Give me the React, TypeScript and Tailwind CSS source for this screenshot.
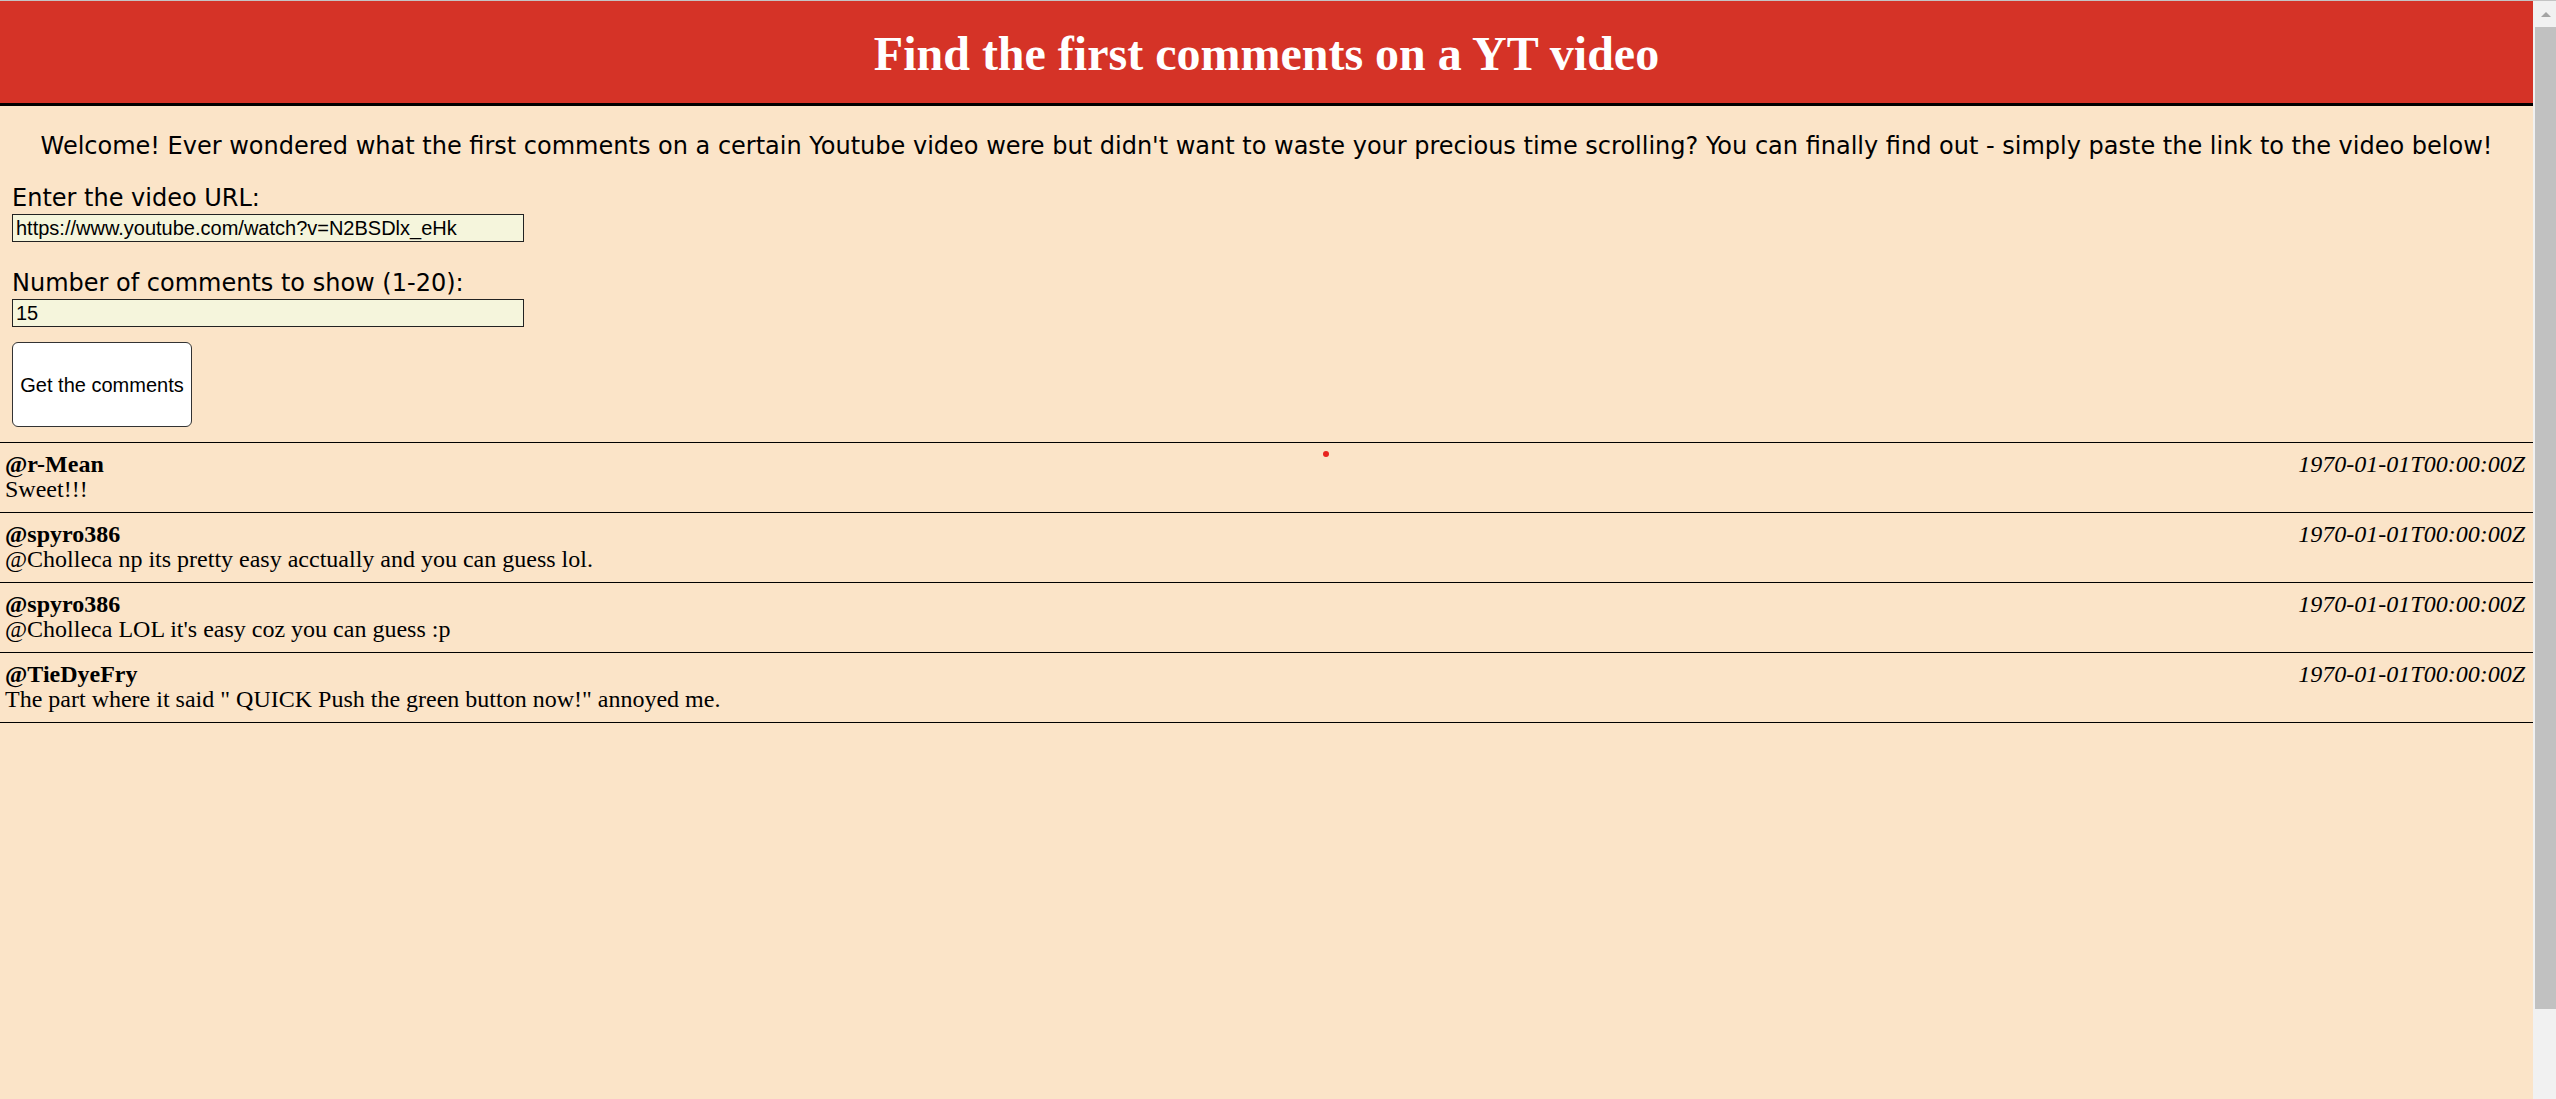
import React from "react";

const comments = [
  { user: "@r-Mean", text: "Sweet!!!" },
  { user: "@spyro386", text: "@Cholleca np its pretty easy acctually and you can guess lol." },
  { user: "@spyro386", text: "@Cholleca LOL it's easy coz you can guess :p" },
  { user: "@TieDyeFry", text: 'The part where it said " QUICK Push the green button now!" annoyed me.' },
];

export default function App() {
  return (
    <div className="w-full h-[1099px] overflow-hidden flex flex-col bg-[#f1f1f1]">
      <div className="h-px w-full bg-[#c4c4c4]" />
      <div className="flex flex-1 min-h-0">
        <main className="relative flex-1 bg-[#fbe4c8] text-black">
          <header className="h-[105px] bg-[#d53327] border-b-[3px] border-black flex items-center justify-center pt-[2px]">
            <h1 className="text-white font-bold text-[48px] leading-[53px] font-['Liberation_Serif',serif]">
              Find the first comments on a YT video
            </h1>
          </header>
          <p className="mt-[27px] text-center text-[24px] leading-[27px] font-['DejaVu_Sans',sans-serif]">
            Welcome! Ever wondered what the first comments on a certain Youtube video were but didn't want to waste your precious time scrolling? You can finally find out - simply paste the link to the video below!
          </p>
          <div className="pl-[12px] pb-[15px] font-['DejaVu_Sans',sans-serif]">
            <div className="mt-[25px] text-[24px] leading-[27px]">Enter the video URL:</div>
            <input
              readOnly
              value="https://www.youtube.com/watch?v=N2BSDlx_eHk"
              className="mt-[2px] block w-[512px] h-[28px] border border-[#222] bg-[#f5f5dc] pl-[3px] text-[20px] text-black font-['Liberation_Sans',sans-serif] outline-none"
            />
            <div className="mt-[28px] text-[24px] leading-[27px]">Number of comments to show (1-20):</div>
            <input
              readOnly
              value="15"
              className="mt-[2px] block w-[512px] h-[28px] border border-[#222] bg-[#f5f5dc] pl-[3px] text-[20px] text-black font-['Liberation_Sans',sans-serif] outline-none"
            />
            <button className="mt-[15px] block w-[180px] h-[85px] bg-white border border-[#333] rounded-[6px] text-[20px] text-black font-['Liberation_Sans',sans-serif]">
              Get the comments
            </button>
          </div>
          <div className="border-t border-black font-['Liberation_Serif',serif]">
            {comments.map((c, i) => (
              <div key={i} className="border-b border-black pl-[5px] pr-[8px] pt-[9px] pb-[10px] text-[24px] leading-[25px]">
                <div className="flex justify-between">
                  <span className="font-bold">{c.user}</span>
                  <span className="italic">1970-01-01T00:00:00Z</span>
                </div>
                <div>{c.text}</div>
              </div>
            ))}
          </div>
          <div className="absolute left-[1323px] top-[450px] w-[6px] h-[6px] rounded-full bg-[#e8231f]" />
        </main>
        <aside className="w-[23px] flex flex-col bg-[#f1f1f1]">
          <div className="h-[26px] flex items-center justify-center pl-[2px]">
            <div className="w-0 h-0 border-l-[5px] border-r-[5px] border-b-[5px] border-l-transparent border-r-transparent border-b-[#a3a3a3]" />
          </div>
          <div className="ml-[2px] h-[982px] bg-[#c1c1c1]" />
        </aside>
      </div>
    </div>
  );
}
